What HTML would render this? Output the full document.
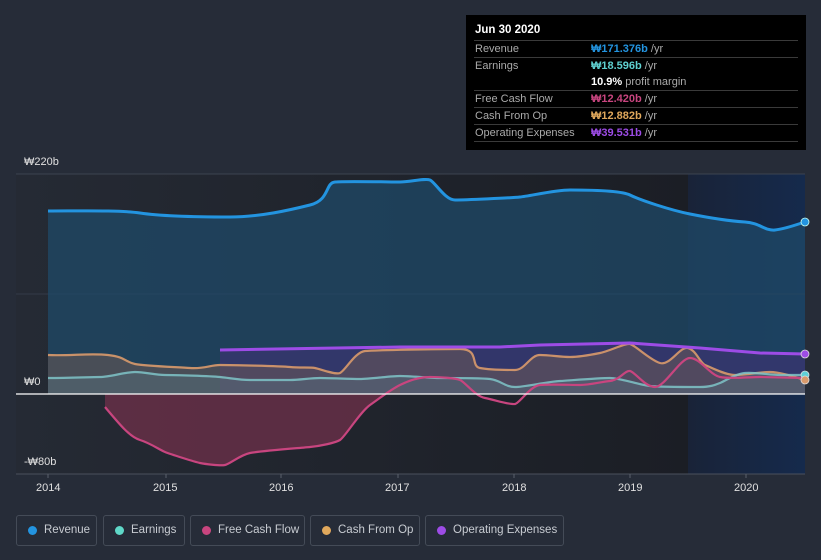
<!DOCTYPE html>
<html><head><meta charset="utf-8"><style>
body{margin:0;background:#262c38;width:821px;height:560px;overflow:hidden;font-family:"Liberation Sans",sans-serif;position:relative}
.tt{position:absolute;left:466px;top:15px;width:340px;height:135px;background:#000;color:#bbb;font-size:11px}
.tt .h{position:absolute;left:9px;top:9px;color:#fff;font-weight:bold;font-size:11.5px}
.row{position:absolute;left:8px;width:324px;border-top:1px solid #3a3a3a;height:16px;line-height:17px}
.row span.l{position:absolute;left:1px;color:#aaa}
.row span.v{position:absolute;left:117px;color:#aaa}
.lg{position:absolute;top:515px;height:31px;border:1px solid #444b57;border-radius:3px;color:#c8ccd2;font-size:11.5px;line-height:29px;box-sizing:border-box;white-space:nowrap}
.lg i{position:absolute;left:11px;top:10px;width:9px;height:9px;border-radius:50%}
.lg span{position:absolute;left:27px}
.ax{position:absolute;color:#e0e0e0;font-size:11px}
</style></head><body>
<svg width="821" height="560" style="position:absolute;left:0;top:0">
<defs>
<linearGradient id="pb" x1="0" x2="1"><stop offset="0" stop-color="#252a34"/><stop offset="1" stop-color="#1b1e25"/></linearGradient>
<linearGradient id="fc" x1="0" x2="1"><stop offset="0" stop-color="#192338"/><stop offset="1" stop-color="#152a4c"/></linearGradient>
</defs>
<rect x="16" y="174" width="672" height="300" fill="url(#pb)"/>
<rect x="688" y="174" width="117" height="300" fill="url(#fc)"/>
<line x1="16" y1="174" x2="805" y2="174" stroke="#3c4350"/>
<line x1="16" y1="294" x2="805" y2="294" stroke="#343b48"/>
<line x1="16" y1="474" x2="805" y2="474" stroke="#4a505c"/>
<path d="M48,211 C80,211 120,210 140,213 S200,217 230,217 S290,210 310,205 S325,183 335,182 S390,182 400,182 S425,178 430,180 S445,200 455,200 S510,198 520,197 S555,190 570,190 S620,190 630,195 S670,210 690,214 S730,221 745,222 S765,231 775,230 S795,225 805,222 L805,394 L48,394Z" fill="#1f4a68" fill-opacity="0.75"/>
<path d="M220,350 L400,347 L500,347 L540,345 L630,343 L700,348 L760,353 L805,354 L805,394 L220,394Z" fill="#3a3470" fill-opacity="0.75"/>
<path d="M105,394 L105,407 C120,425 130,437 140,440 S160,450 165,452 S195,462 200,463 S220,466 225,465 S240,455 250,453 S300,448 310,447 S335,443 340,440 S360,412 370,405 S390,390 400,385 L400,394Z" fill="#6a2f48" fill-opacity="0.8"/>
<path d="M48,355 C70,356 90,353 108,355 S125,362 135,364 S175,367 190,368 S210,365 220,365 S280,366 290,367 S310,367 315,368 S335,375 340,373 S355,352 365,351 S440,349 460,349 S470,366 480,368 S505,370 515,370 S530,355 540,355 S560,357 570,357 S590,355 600,353 S625,343 630,344 S650,360 660,363 S680,346 688,348 S700,363 705,365 S725,375 735,375 S760,372 770,372 S795,377 805,380 L805,394 L48,394Z" fill="#6b5a55" fill-opacity="0.55"/>
<path d="M48,378 C70,378 90,377 100,377 S125,372 135,372 S155,375 165,375 S210,376 220,377 S240,380 250,380 S280,380 290,380 S310,378 320,378 S350,379 360,379 S390,376 400,376 S430,378 440,378 S480,378 490,379 S505,387 515,387 S545,382 560,381 S600,378 610,378 S640,385 650,386 S690,387 700,387 S715,385 720,383 S735,374 745,373 S770,375 780,375 L805,375 L805,394 L48,394Z" fill="#5a7a8a" fill-opacity="0.35"/>
<path d="M48,211 C80,211 120,210 140,213 S200,217 230,217 S290,210 310,205 S325,183 335,182 S390,182 400,182 S425,178 430,180 S445,200 455,200 S510,198 520,197 S555,190 570,190 S620,190 630,195 S670,210 690,214 S730,221 745,222 S765,231 775,230 S795,225 805,222" fill="none" stroke="#2394e0" stroke-width="3"/>
<path d="M48,355 C70,356 90,353 108,355 S125,362 135,364 S175,367 190,368 S210,365 220,365 S280,366 290,367 S310,367 315,368 S335,375 340,373 S355,352 365,351 S440,349 460,349 S470,366 480,368 S505,370 515,370 S530,355 540,355 S560,357 570,357 S590,355 600,353 S625,343 630,344 S650,360 660,363 S680,346 688,348 S700,363 705,365 S725,375 735,375 S760,372 770,372 S795,377 805,380" fill="none" stroke="#d99a6c" stroke-width="2.2" stroke-opacity="0.9"/>
<path d="M48,378 C70,378 90,377 100,377 S125,372 135,372 S155,375 165,375 S210,376 220,377 S240,380 250,380 S280,380 290,380 S310,378 320,378 S350,379 360,379 S390,376 400,376 S430,378 440,378 S480,378 490,379 S505,387 515,387 S545,382 560,381 S600,378 610,378 S640,385 650,386 S690,387 700,387 S715,385 720,383 S735,374 745,373 S770,375 780,375 L805,375" fill="none" stroke="#7fc4c8" stroke-width="2.2" stroke-opacity="0.85"/>
<path d="M105,407 C120,425 130,437 140,440 S160,450 165,452 S195,462 200,463 S220,466 225,465 S240,455 250,453 S300,448 310,447 S335,443 340,440 S360,412 370,405 S390,390 400,385 S420,377 430,377 S455,378 460,380 S475,396 485,398 S510,405 515,404 S530,386 540,385 S570,385 580,385 S600,382 610,381 S625,370 630,371 S645,387 655,387 S680,358 690,358 S710,375 720,377 S750,377 760,377 L805,378" fill="none" stroke="#c8457f" stroke-width="2.2"/>
<path d="M220,350 L400,347 L500,347 L540,345 L630,343 L700,348 L760,353 L805,354" fill="none" stroke="#9d4ce6" stroke-width="3"/>
<line x1="16" y1="394" x2="805" y2="394" stroke="#ffffff" stroke-width="1.2"/>
<circle cx="805" cy="222" r="4" fill="#2394e0" stroke="#cfe" stroke-width="0.8"/>
<circle cx="805" cy="354" r="4" fill="#9d4ce6" stroke="#ddd" stroke-width="0.8"/>
<circle cx="805" cy="375" r="4" fill="#5fd0d8" stroke="#ddd" stroke-width="0.8"/>
<circle cx="805" cy="380" r="4" fill="#d99a6c" stroke="#ddd" stroke-width="0.8"/>
<g stroke="#5a606b"><line x1="48" y1="474" x2="48" y2="478"/><line x1="166" y1="474" x2="166" y2="478"/><line x1="281" y1="474" x2="281" y2="478"/><line x1="398" y1="474" x2="398" y2="478"/><line x1="514" y1="474" x2="514" y2="478"/><line x1="630" y1="474" x2="630" y2="478"/><line x1="746" y1="474" x2="746" y2="478"/></g>
</svg>
<div class="ax" style="left:24px;top:156px">₩220b</div>
<div class="ax" style="left:24px;top:376px">₩0</div>
<div class="ax" style="left:24px;top:456px">-₩80b</div>
<div class="ax" style="left:36px;top:482px">2014</div>
<div class="ax" style="left:153px;top:482px">2015</div>
<div class="ax" style="left:269px;top:482px">2016</div>
<div class="ax" style="left:385px;top:482px">2017</div>
<div class="ax" style="left:502px;top:482px">2018</div>
<div class="ax" style="left:618px;top:482px">2019</div>
<div class="ax" style="left:734px;top:482px">2020</div>
<div class="tt">
<div class="h">Jun 30 2020</div>
<div class="row" style="top:25px"><span class="l">Revenue</span><span class="v"><b style="color:#2394e0">₩171.376b</b> /yr</span></div>
<div class="row" style="top:42px;height:33px"><span class="l">Earnings</span><span class="v"><b style="color:#5fd0d0">₩18.596b</b> /yr</span><span class="v" style="top:16px"><b style="color:#fff">10.9%</b> profit margin</span></div>
<div class="row" style="top:75px"><span class="l">Free Cash Flow</span><span class="v"><b style="color:#c8457f">₩12.420b</b> /yr</span></div>
<div class="row" style="top:92px"><span class="l">Cash From Op</span><span class="v"><b style="color:#e0a85c">₩12.882b</b> /yr</span></div>
<div class="row" style="top:109px;border-bottom:1px solid #3a3a3a"><span class="l">Operating Expenses</span><span class="v"><b style="color:#9d4ce6">₩39.531b</b> /yr</span></div>
</div>
<div class="lg" style="left:16px;width:81px"><i style="background:#2394e0"></i><span>Revenue</span></div>
<div class="lg" style="left:103px;width:82px"><i style="background:#5fd8c8"></i><span>Earnings</span></div>
<div class="lg" style="left:190px;width:115px"><i style="background:#c8457f"></i><span>Free Cash Flow</span></div>
<div class="lg" style="left:310px;width:110px"><i style="background:#e0a85c"></i><span>Cash From Op</span></div>
<div class="lg" style="left:425px;width:139px"><i style="background:#9d4ce6"></i><span>Operating Expenses</span></div>
</body></html>
